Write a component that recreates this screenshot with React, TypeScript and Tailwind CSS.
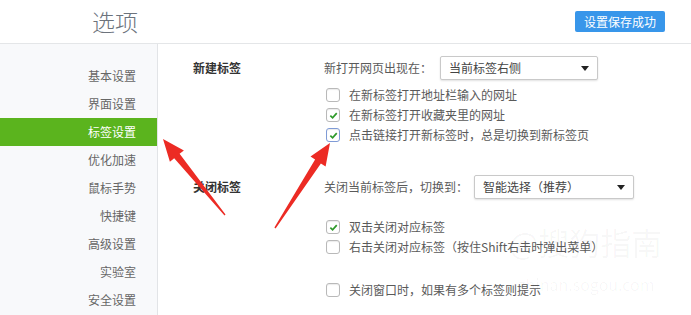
import { ReactNode } from 'react';

const menu = ['基本设置', '界面设置', '标签设置', '优化加速', '鼠标手势', '快捷键', '高级设置', '实验室', '安全设置'];

function Checkbox({ checked, focus, children }: { checked?: boolean; focus?: boolean; children: ReactNode }) {
  return (
    <label className="flex h-[20px] items-center gap-[9px]">
      <span
        className={`flex h-[14px] w-[14px] shrink-0 items-center justify-center rounded-[3px] border bg-white shadow-[inset_0_1px_1px_rgba(0,0,0,0.08)] ${
          focus ? 'border-[#7f9bd6]' : 'border-[#b9b9b9]'
        }`}
      >
        {checked && (
          <svg viewBox="0 0 10 10" className="h-[9px] w-[9px]">
            <path d="M1.5 5.2 L4 7.6 L8.6 2.4" fill="none" stroke="#2e9a2a" strokeWidth="1.9" />
          </svg>
        )}
      </span>
      <span className="whitespace-nowrap text-[12px] text-[#5a5a5a]">{children}</span>
    </label>
  );
}

function Select({ value, width }: { value: string; width: string }) {
  return (
    <div
      className={`flex h-[24px] shrink-0 ${width} items-center justify-between rounded-[2px] border border-[#c9c9c9] bg-white pl-[8px] pr-[8px] text-[12px] text-[#444] shadow-[0_1px_2px_rgba(0,0,0,0.12)]`}
    >
      <span className="whitespace-nowrap">{value}</span>
      <span className="h-0 w-0 border-x-[4px] border-t-[5px] border-x-transparent border-t-[#222]" />
    </div>
  );
}

export default function App() {
  return (
    <div className="relative h-[315px] w-[691px] overflow-hidden bg-white font-['Noto_Sans_CJK_SC','Noto_Sans',sans-serif]">
      <header className="flex h-[44px] items-center justify-between border-b border-[#e4e6e8] pl-[92px] pr-[26px]">
        <h1 className="text-[23px] font-light leading-none text-[#6c737c]">选项</h1>
        <button className="h-[21px] w-[90px] rounded-[2px] bg-[#3896ea] text-[12px] leading-[21px] text-white">
          设置保存成功
        </button>
      </header>

      <div className="flex h-[271px]">
        <nav className="w-[158px] shrink-0 border-r border-[#e2e4e7] bg-[#f8f9fb] pt-[18px]">
          {menu.map((m) => (
            <div
              key={m}
              className={`flex h-[28px] items-center justify-end pr-[21px] text-[12px] ${
                m === '标签设置' ? 'bg-[#5bb41e] text-white' : 'text-[#666]'
              }`}
            >
              {m}
            </div>
          ))}
        </nav>

        <main className="flex-1 pl-[35px] pt-[12px]">
          <section className="flex">
            <h2 className="flex h-[24px] w-[131px] shrink-0 items-center text-[12px] font-bold text-[#333]">新建标签</h2>
            <div>
              <div className="flex h-[24px] items-center">
                <span className="w-[116px] shrink-0 whitespace-nowrap text-[12px] text-[#5a5a5a]">新打开网页出现在：</span>
                <Select value="当前标签右侧" width="w-[158px]" />
              </div>
              <div className="mt-[5px] pl-[2px]">
                <Checkbox>在新标签打开地址栏输入的网址</Checkbox>
                <Checkbox checked>在新标签打开收藏夹里的网址</Checkbox>
                <Checkbox checked focus>点击链接打开新标签时，总是切换到新标签页</Checkbox>
              </div>
            </div>
          </section>

          <section className="mt-[30px] flex">
            <h2 className="flex h-[24px] w-[131px] shrink-0 items-center text-[12px] font-bold text-[#333]">关闭标签</h2>
            <div>
              <div className="flex h-[24px] items-center">
                <span className="w-[150px] shrink-0 whitespace-nowrap text-[12px] text-[#5a5a5a]">关闭当前标签后，切换到：</span>
                <Select value="智能选择（推荐）" width="w-[160px]" />
              </div>
              <div className="mt-[18px] pl-[2px]">
                <Checkbox checked>双击关闭对应标签</Checkbox>
                <Checkbox>右击关闭对应标签（按住Shift右击时弹出菜单）</Checkbox>
                <div className="mt-[23px]">
                  <Checkbox>关闭窗口时，如果有多个标签则提示</Checkbox>
                </div>
              </div>
            </div>
          </section>
        </main>
      </div>

      {/* watermark */}
      <div className="pointer-events-none absolute left-[509px] top-[226px] text-[31px] leading-none text-black/[0.035]">
        @搜狗指南
      </div>
      <div className="pointer-events-none absolute left-[518px] top-[276px] text-[16px] leading-none text-black/[0.035]">
        zhinan.sogou.com
      </div>

      <svg className="pointer-events-none absolute left-0 top-0" width="691" height="315">
        <polygon
          fill="#ec2b24"
          points="163,139 183.9,150.4 179.6,153.8 225.5,214.6 224.5,215.4 174.2,158.3 169.9,161.7"
        />
        <polygon
          fill="#ec2b24"
          points="330,143 325.6,166.4 320.9,163.4 275.6,228.4 274.4,227.6 315.1,159.6 310.5,156.6"
        />
      </svg>
    </div>
  );
}
